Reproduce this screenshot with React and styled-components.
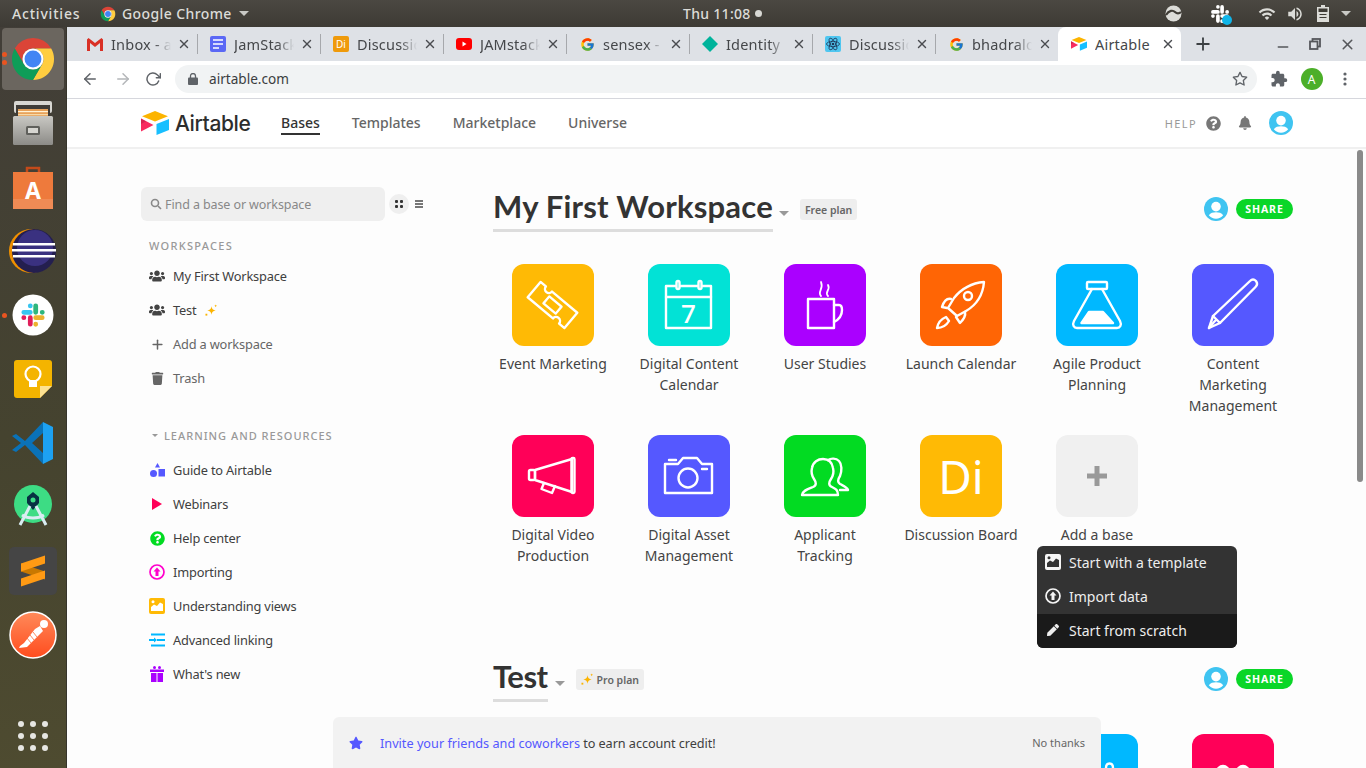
import React from 'react';
import styled, { createGlobalStyle } from 'styled-components';
import { FaUsers, FaTrash, FaBell, FaQuestionCircle, FaStar, FaPen } from 'react-icons/fa';
import { FcGoogle } from 'react-icons/fc';
import { MdExtension, MdVolumeUp, MdWifi } from 'react-icons/md';
import { FiArrowLeft, FiArrowRight, FiRotateCw, FiStar, FiPlus, FiX, FiMinus } from 'react-icons/fi';

const FONT = '"Noto Sans", "Open Sans", sans-serif';

const GlobalStyle = createGlobalStyle`
  html, body { margin: 0; padding: 0; background: #fdfdfd; }
  * { box-sizing: border-box; }
  body { font-family: ${FONT}; }
`;

// 전체 화면
const Screen = styled.div`
  width: 1366px;
  height: 768px;
  overflow: hidden;
  display: flex;
  flex-direction: column;
`;

// 상단 시스템 바
const TopBar = styled.div`
  height: 27px;
  flex: none;
  display: flex;
  align-items: center;
  background: linear-gradient(#4b4842, #3d3a34);
  color: #dcdcd8;
  font-size: 14px;
  font-weight: 500;
`;
const Activities = styled.span`
  margin-left: 12px;
  width: 88px;
  letter-spacing: 0.8px;
`;
const AppMenu = styled.div`
  display: flex;
  align-items: center;
  gap: 6px;
  width: 150px;
  letter-spacing: 0.4px;
`;
const Caret = styled.span`
  flex: none;
  width: 0;
  height: 0;
  border-left: ${p => p.$size || 5}px solid transparent;
  border-right: ${p => p.$size || 5}px solid transparent;
  border-top: ${p => p.$size || 5}px solid ${p => p.$color || '#c9c9c5'};
  margin-left: ${p => p.$gap || 0}px;
  margin-top: ${p => p.$drop || 0}px;
`;
const Clock = styled.div`
  margin-left: 433px;
  width: 472px;
  display: flex;
  align-items: center;
  gap: 4px;
  letter-spacing: 0.3px;
`;
const ClockDot = styled.span`
  width: 7px;
  height: 7px;
  border-radius: 50%;
  background: #d8d8d4;
`;
const Tray = styled.div`
  display: flex;
  align-items: center;
  color: #dcdcd8;
`;
const TraySlot = styled.div`
  width: ${p => p.$w}px;
  display: flex;
  justify-content: center;
  align-items: center;
`;
const TrayBadge = styled.div`
  position: relative;
  width: 20px;
  height: 20px;
  svg + svg {
    position: absolute;
    right: -2px;
    bottom: -1px;
  }
`;

const Body = styled.div`
  flex: 1;
  display: flex;
  min-height: 0;
`;

// 왼쪽 독
const Dock = styled.div`
  width: 67px;
  flex: none;
  display: flex;
  flex-direction: column;
  position: relative;
  background: linear-gradient(175deg, #423e38 0%, #45432f 55%, #4e4b30 100%);
  border-right: 1px solid #37352c;
`;
const DockItem = styled.div`
  height: 64px;
  flex: none;
  display: flex;
  align-items: center;
  justify-content: center;
  position: relative;
  &::before {
    content: '';
    position: absolute;
    inset: 1px 2px 1px 2px;
    border-radius: 4px;
    background: ${p => (p.$active ? '#6b665f' : 'transparent')};
  }
  svg { position: relative; }
`;
const RunDot = styled.span`
  position: absolute;
  left: 2px;
  top: ${p => p.$top}px;
  width: 5px;
  height: 5px;
  border-radius: 50%;
  background: #e95420;
`;
const DockGrid = styled.div`
  margin-top: auto;
  margin-bottom: 17px;
  margin-left: 18px;
  display: grid;
  grid-template-columns: repeat(3, 6px);
  gap: 6px;
`;
const GridDot = styled.span`
  width: 6px;
  height: 6px;
  border-radius: 50%;
  background: #e6e6e2;
`;

// 크롬 창
const Browser = styled.div`
  flex: 1;
  min-width: 0;
  display: flex;
  flex-direction: column;
`;
const TabStrip = styled.div`
  height: 34px;
  flex: none;
  display: flex;
  align-items: stretch;
  padding-left: 7px;
  background: #dee1e6;
`;
const TabBox = styled.div`
  width: 123px;
  flex: none;
  position: relative;
  display: flex;
  align-items: center;
  padding-left: 13px;
  background: ${p => (p.$active ? '#fff' : 'transparent')};
  border-radius: 8px 8px 0 0;
  color: #45474a;
  font-size: 14.5px;
  &::after {
    content: '';
    position: absolute;
    right: -1px;
    top: 7px;
    bottom: 7px;
    width: 1px;
    background: ${p => (p.$last ? 'transparent' : '#a6a8ac')};
  }
`;
const TabIcon = styled.div`
  width: 16px;
  height: 16px;
  flex: none;
  display: flex;
  align-items: center;
  justify-content: center;
`;
const TabTitle = styled.span`
  margin-left: 8px;
  width: 60px;
  white-space: nowrap;
  overflow: hidden;
  letter-spacing: 0.2px;
  -webkit-mask-image: ${p => (p.$active ? 'none' : 'linear-gradient(to right, #000 72%, transparent 100%)')};
`;
const TabClose = styled.div`
  margin-left: 6px;
  display: flex;
  color: #4a4c50;
`;
const NewTab = styled.div`
  width: 44px;
  display: flex;
  align-items: center;
  justify-content: center;
  color: #3c4043;
`;
const WinButtons = styled.div`
  margin-left: auto;
  display: flex;
  align-items: center;
  padding-right: 2px;
  color: #55575b;
`;
const WinButton = styled.div`
  width: 33px;
  display: flex;
  justify-content: center;
  svg { margin-top: ${p => p.$drop || 0}px; margin-left: ${p => p.$nudge || 0}px; }
`;

const Toolbar = styled.div`
  height: 38px;
  flex: none;
  display: flex;
  align-items: center;
  background: #fff;
  border-bottom: 1px solid #d6d7dd;
  padding: 0 0 1px 6px;
`;
const NavButton = styled.div`
  width: ${p => p.$w || 33}px;
  display: flex;
  justify-content: center;
  color: ${p => (p.$off ? '#b4b6b9' : '#5f6368')};
`;
const Omnibox = styled.div`
  width: 1082px;
  height: 28px;
  margin-left: 8px;
  padding: 0 9px 0 13px;
  display: flex;
  align-items: center;
  border-radius: 14px;
  background: #f1f3f4;
  color: #3b3d40;
  font-size: 13.6px;
`;
const Url = styled.span`
  margin-left: 11px;
  flex: 1;
  margin-bottom: 1px;
`;
const ToolIcons = styled.div`
  display: flex;
  align-items: center;
  margin-left: 5px;
  color: #5f6368;
`;
const ToolSlot = styled.div`
  width: 33px;
  display: flex;
  justify-content: center;
`;
const ChromeAvatar = styled.div`
  width: 22px;
  height: 22px;
  border-radius: 50%;
  background: #4caf29;
  color: #fff;
  font-size: 12px;
  display: flex;
  align-items: center;
  justify-content: center;
`;

// 페이지
const Page = styled.div`
  flex: 1;
  min-height: 0;
  position: relative;
  overflow: hidden;
  display: flex;
  flex-direction: column;
  background: #fdfdfd;
`;
const Header = styled.div`
  height: 50px;
  flex: none;
  display: flex;
  align-items: center;
  padding: 0 73px 0 74px;
  background: #fff;
  border-bottom: 2px solid #f0f0f0;
`;
const Brand = styled.div`
  display: flex;
  align-items: center;
  gap: 6px;
  width: 140px;
  color: #2d2d2d;
  font-family: Inter, sans-serif;
  font-size: 21px;
  font-weight: 500;
  letter-spacing: -0.4px;
`;
const NavLinks = styled.div`
  display: flex;
  gap: 32px;
  align-self: stretch;
  align-items: center;
`;
const NavLink = styled.div`
  font-size: 14px;
  font-weight: 500;
  color: ${p => (p.$active ? '#333' : '#666')};
  padding: 2px 0 1px;
  border-bottom: 2px solid ${p => (p.$active ? '#333' : 'transparent')};
`;
const HeaderRight = styled.div`
  margin-left: auto;
  display: flex;
  align-items: center;
  color: #777;
`;
const HelpText = styled.span`
  font-size: 11px;
  letter-spacing: 1.4px;
  color: #999;
  margin-right: 9px;
`;
const HeaderIcon = styled.div`
  margin-left: ${p => p.$gap || 0}px;
  display: flex;
`;

const Content = styled.div`
  flex: 1;
  display: flex;
  padding: 38px 0 0 74px;
  min-height: 0;
`;
const Sidebar = styled.div`
  width: 344px;
  flex: none;
`;
const SearchRow = styled.div`
  display: flex;
  align-items: center;
`;
const SearchBox = styled.div`
  width: 244px;
  height: 34px;
  border-radius: 6px;
  background: #efefef;
  display: flex;
  align-items: center;
  gap: 3px;
  padding-left: 9px;
  color: #888;
  font-size: 12.5px;
  letter-spacing: -0.1px;
`;
const GridToggle = styled.div`
  width: 20px;
  height: 20px;
  margin-left: 4px;
  border-radius: 50%;
  background: #efefef;
  display: grid;
  grid-template-columns: repeat(2, 3px);
  gap: 2px;
  place-content: center;
`;
const ToggleDot = styled.span`
  width: 3px;
  height: 3px;
  background: #333;
  border-radius: 1px;
`;
const ListToggle = styled.div`
  margin-left: 6px;
  width: 8px;
  height: 8px;
  border-top: 2px solid #777;
  border-bottom: 2px solid #777;
  position: relative;
  &::after {
    content: '';
    position: absolute;
    left: 0;
    right: 0;
    top: 1px;
    height: 2px;
    background: #777;
  }
`;
const SideHeading = styled.div`
  display: flex;
  align-items: center;
  height: 20px;
  margin: ${p => p.$top}px 0 ${p => p.$bottom}px ${p => p.$left || 8}px;
  font-size: 11px;
  font-weight: 500;
  letter-spacing: ${p => p.$spacing || 1.3}px;
  color: #999;
`;
const HeadingText = styled.span`
  margin-left: 6px;
`;
const SideItem = styled.div`
  height: 34px;
  display: flex;
  align-items: center;
  font-size: 12.8px;
  letter-spacing: -0.17px;
  color: ${p => (p.$muted ? '#666' : '#404040')};
`;
const SideIcon = styled.div`
  width: 16px;
  height: 16px;
  margin: 0 8px;
  display: flex;
  align-items: center;
  justify-content: center;
  color: ${p => p.$color || '#444'};
`;
const SideSparkle = styled.span`
  margin-left: 8px;
  display: flex;
`;

const Main = styled.div`
  width: 816px;
  flex: none;
`;
const SectionHead = styled.div`
  height: 45px;
  padding: 0 8px;
  display: flex;
  align-items: center;
`;
const TitleWrap = styled.div`
  height: 45px;
  border-bottom: 3px solid #ddd;
  display: flex;
  align-items: center;
  color: #333;
  font-family: Lato, sans-serif;
  font-size: 31px;
  font-weight: 700;
  line-height: 40px;
  letter-spacing: ${p => p.$spacing}px;
  padding-bottom: 5px;
`;
const PlanBadge = styled.div`
  margin-left: ${p => p.$gap}px;
  height: 21px;
  padding: 0 5px;
  border-radius: 3px;
  background: #eee;
  color: #666;
  font-size: 10.5px;
  font-weight: 600;
  display: flex;
  align-items: center;
  gap: 3px;
`;
const ShareWrap = styled.div`
  margin-left: auto;
  margin-bottom: 1px;
  display: flex;
  align-items: center;
  gap: 8px;
`;
const ShareButton = styled.div`
  width: 57px;
  height: 20px;
  border-radius: 10px;
  background: #0ad628;
  color: #fff;
  font-size: 10.5px;
  font-weight: 700;
  letter-spacing: 0.9px;
  display: flex;
  align-items: center;
  justify-content: center;
`;
const BaseGrid = styled.div`
  margin: 32px 0 ${p => p.$bottom || 0}px;
  display: grid;
  grid-template-columns: repeat(6, 136px);
  grid-template-rows: ${p => p.$rows || 'auto'};
  row-gap: 18px;
`;
const BaseItem = styled.div`
  position: relative;
  display: flex;
  flex-direction: column;
  align-items: center;
`;
const Tile = styled.div`
  width: 82px;
  height: 82px;
  flex: none;
  border-radius: 12px;
  background: ${p => p.$color};
  display: flex;
  align-items: center;
  justify-content: center;
  color: #fff;
  font-size: 46px;
  svg { display: block; }
`;
const BaseLabel = styled.div`
  margin-top: 7px;
  width: 116px;
  text-align: center;
  font-size: 14px;
  line-height: 21px;
  color: #444;
`;

// 베이스 추가 메뉴
const AddMenu = styled.div`
  position: absolute;
  left: 8px;
  top: 111px;
  width: 200px;
  border-radius: 6px;
  overflow: hidden;
  background: #333;
  z-index: 3;
`;
const MenuRow = styled.div`
  height: 34px;
  display: flex;
  align-items: center;
  padding: 0 0 2px 8px;
  gap: 8px;
  background: ${p => (p.$hot ? '#1a1a1a' : 'transparent')};
  color: #eee;
  font-size: 14px;
`;
const PenSlot = styled.span`
  width: 16px;
  display: flex;
  justify-content: center;
`;

// 하단 초대 배너
const Banner = styled.div`
  position: absolute;
  left: 266px;
  bottom: 0;
  width: 768px;
  height: 51px;
  border-radius: 6px 6px 0 0;
  background: #f2f2f2;
  display: flex;
  align-items: center;
  padding: 0 16px;
  font-size: 12.7px;
  color: #404040;
  z-index: 4;
`;
const BannerLink = styled.span`
  color: #5558ff;
  margin: 0 3px 0 17px;
`;
const BannerRest = styled.span`
  letter-spacing: -0.07px;
`;
const NoThanks = styled.span`
  margin-left: auto;
  font-size: 11px;
  color: #666;
`;
const Scrollbar = styled.div`
  position: absolute;
  right: 3px;
  top: 51px;
  width: 6px;
  height: 332px;
  border-radius: 3px;
  background: #8a8a8a;
`;

/* ---------- 그림 아이콘 ---------- */

function ChromeLogo({ size }) {
  return (
    <svg width={size} height={size} viewBox="0 0 48 48">
      <path fill="#db4437" d="M24 2A22 22 0 0 1 43 13H24A11 11 0 0 0 14.5 29.5L5 13A22 22 0 0 1 24 2Z" />
      <path fill="#ffcd40" d="M43 13A22 22 0 0 1 24 46L33.5 29.5A11 11 0 0 0 24 13Z" />
      <path fill="#0f9d58" d="M5 13A22 22 0 0 0 24 46L33.5 29.5A11 11 0 0 1 14.5 29.5Z" />
      <circle cx="24" cy="24" r="11" fill="#fff" />
      <circle cx="24" cy="24" r="8.8" fill="#4285f4" />
    </svg>
  );
}

// 슬랙 로고 조각
function SlackParts({ mono }) {
  const pill = { strokeWidth: 4.4, strokeLinecap: 'round', fill: 'none' };
  return (
    <>
      <path {...pill} stroke={mono || '#36c5f0'} d="M3.5 9.5H9.5M9.5 3.5V3.6" />
      <path {...pill} stroke={mono || '#2eb67d'} d="M14.5 3.5V9.5M20.5 9.5H20.6" />
      <path {...pill} stroke={mono || '#ecb22e'} d="M14.5 14.5H20.5M14.5 20.5V20.6" />
      <path {...pill} stroke={mono || '#e01e5a'} d="M9.5 14.5V20.5M3.5 14.5H3.6" />
    </>
  );
}

function AirtableLogo({ size }) {
  return (
    <svg width={size} height={size * 24 / 28} viewBox="0 0 28 24">
      <path fill="#fcb400" d="M14 0L27 5.2 14 10.5 1 5.2Z" />
      <path fill="#18bfff" d="M15.5 13L28 8V19L15.5 24Z" />
      <path fill="#f82b60" d="M0 7.6L12.5 14 0 20.4Z" />
      <path fill="#ba1e45" d="M0 7.6L5 10.2 0 13Z" opacity=".55" />
    </svg>
  );
}

function Avatar({ size }) {
  return (
    <svg width={size} height={size} viewBox="0 0 24 24">
      <circle cx="12" cy="12" r="12" fill="#3fc4f1" />
      <circle cx="12" cy="9.6" r="4.8" fill="#fff" />
      <path fill="#fff" d="M4.8 18.3C6.6 15.9 9 15.3 12 15.3s5.4.6 7.2 3A9.4 9.4 0 0 1 4.8 18.3Z" />
    </svg>
  );
}

function Sparkle({ size }) {
  return (
    <svg width={size} height={size} viewBox="0 0 14 14" fill="#fcb400">
      <path d="M7 2.5C7.4 5.3 8.6 6.5 11.5 7 8.6 7.5 7.4 8.7 7 11.5 6.6 8.7 5.4 7.5 2.5 7 5.4 6.5 6.6 5.3 7 2.5Z" />
      <path d="M11.5.5l.5 1 1 .5-1 .5-.5 1-.5-1-1-.5 1-.5Z" />
      <rect x="0.5" y="10.5" width="2" height="2" />
    </svg>
  );
}

const Line = ({ children, width = 2.4 }) => (
  <svg width="82" height="82" viewBox="0 0 82 82" fill="none" stroke="#fff" strokeWidth={width} strokeLinejoin="round" strokeLinecap="round">
    {children}
  </svg>
);

const glyphs = {
  ticket: (
    <Line>
      <g transform="translate(40.5 41) rotate(40)">
        <path d="M-24 -10H-17A4 4 0 0 0 -9 -10H24V10H17A4 4 0 0 0 9 10H-24Z" />
        <rect x="-8" y="-4.5" width="16" height="9" />
      </g>
    </Line>
  ),
  calendar: (
    <Line>
      <rect x="18" y="22" width="45" height="42" />
      <path d="M18 33H63" />
      <rect x="28.5" y="17" width="3" height="8" rx="1.5" fill="#02e2d6" />
      <rect x="50.5" y="17" width="3" height="8" rx="1.5" fill="#02e2d6" />
      <text x="40.5" y="59" textAnchor="middle" fill="#fff" stroke="none" fontSize="26" fontWeight="500" fontFamily={FONT}>7</text>
    </Line>
  ),
  cup: (
    <Line>
      <rect x="24" y="35" width="26" height="29" />
      <path d="M50 41H55C58 41 58 44 58 46C58 52 54 56 50 58" />
      <path d="M37 32C33 28 40 25 37 18M44 32C40 28 47 26 44 21" strokeWidth="1.8" />
    </Line>
  ),
  rocket: (
    <Line>
      <path d="M64 18C52 19 42 24 34 34L28 44L37 52L46 47C58 40 63 30 64 18Z" />
      <circle cx="48" cy="32" r="4" />
      <path d="M31 35C27 34 24 37 22 43L27 44M45 48C46 52 44 55 40 59L36 53" />
      <path d="M26 53C21 55 18 59 17 64C22 64 26 62 29 57Z" />
    </Line>
  ),
  flask: (
    <Line>
      <rect x="31" y="18" width="20" height="7" rx="1" />
      <path d="M36 25L18 57C16 61 18 64 21 64H61C64 64 66 61 64 57L46 25" />
      <path d="M25.5 59L33 48H47L57 59Z" fill="#fff" />
    </Line>
  ),
  pencil: (
    <Line>
      <path d="M17 64L21 52L58 17C60 15 62 15 64 17C65.5 19 65.5 21 63.5 23L28 59Z" />
      <path d="M17 64L22 58L24 56" fill="#fff" />
      <path d="M21 52L28 59" />
    </Line>
  ),
  megaphone: (
    <Line>
      <path d="M23 35L60 24V57L23 45Z" />
      <rect x="59.5" y="23" width="3" height="35" rx="1.2" />
      <rect x="17" y="35" width="6" height="10" rx="1.5" />
      <path d="M32 48L29.5 54L40 58L43 51" />
    </Line>
  ),
  camera: (
    <Line>
      <path d="M17 29H30L35 23H49L54 29H64V58H17Z" />
      <circle cx="40" cy="43" r="9.5" />
      <path d="M21 25H28M54 34H59" />
    </Line>
  ),
  users: (
    <Line>
      <path d="M18 60C19 55 24 54 29 52C33 50 32 47 30 44C28 41 27 37 28 33C29 27 34 24 39 24C44 24 48 27 49 33C50 37 49 41 47 44C45 47 44 50 48 52C52 54 54 55 54 60Z" />
      <path d="M44 25C47 23 52 23 55 26C58 29 58 36 56 41C54 44 53 47 56 49C60 51 63 52 64 55H56" />
    </Line>
  ),
  plus: (
    <svg width="22" height="22" viewBox="0 0 22 22" fill="#999">
      <rect x="8.5" y="1" width="5" height="20" />
      <rect x="1" y="8.5" width="20" height="5" />
    </svg>
  ),
  lowerBlue: (
    <Line>
      <path d="M50 34C50 28 57 28 57 34V50" />
    </Line>
  ),
  lowerPink: (
    <Line>
      <circle cx="31" cy="38" r="6" fill="#fff" />
      <circle cx="51" cy="38" r="6" fill="#fff" />
    </Line>
  ),
};

const ImageIcon = ({ size, color, cut }) => (
  <svg width={size} height={size} viewBox="0 0 16 16">
    <rect width="16" height="16" rx="2" fill={color} />
    <path fill={cut} d="M2 13V9L5 6.5L8 8L11 4.5L14 6V13Z" />
    <circle cx="4" cy="3.8" r="1.5" fill={cut} />
  </svg>
);

const UploadIcon = ({ size, color }) => (
  <svg width={size} height={size} viewBox="0 0 16 16">
    <circle cx="8" cy="8" r="7" fill="none" stroke={color} strokeWidth="1.7" />
    <path fill={color} d="M8 3.5L11.5 7.5H9.5V12H6.5V7.5H4.5Z" />
  </svg>
);

const sideIcons = {
  guide: (
    <svg width="15" height="15" viewBox="0 0 15 15" fill="#5558ff">
      <path d="M7.5 0L10 4.5H5Z" />
      <circle cx="3.5" cy="10.5" r="3.5" />
      <rect x="8.5" y="6" width="6.5" height="7.5" />
    </svg>
  ),
  play: (
    <svg width="12" height="12" viewBox="0 0 12 12"><path fill="#ff0058" d="M1 0L11 6L1 12Z" /></svg>
  ),
  link: (
    <svg width="16" height="14" viewBox="0 0 16 14" fill="#00b8ff">
      <rect x="2" y="0.5" width="14" height="2" />
      <rect x="8" y="6" width="8" height="2" />
      <rect x="0" y="6" width="6" height="2" />
      <rect x="2" y="11.5" width="14" height="2" />
      <path d="M5 4.5L8 7L5 9.5Z" />
    </svg>
  ),
  gift: (
    <svg width="14" height="16" viewBox="0 0 14 16" fill="#aa00ff">
      <rect x="0" y="3.5" width="14" height="2.5" />
      <rect x="1" y="7" width="5.5" height="9" />
      <rect x="7.5" y="7" width="5.5" height="9" />
      <circle cx="4.5" cy="1.5" r="1.5" />
      <circle cx="9.5" cy="1.5" r="1.5" />
    </svg>
  ),
};

/* ---------- 독 아이콘 ---------- */

const FilesIcon = () => (
  <svg width="44" height="46" viewBox="0 0 44 46">
    <defs>
      <linearGradient id="cabinet" x1="0" y1="0" x2="0" y2="1">
        <stop offset="0" stopColor="#c9c8c3" />
        <stop offset="1" stopColor="#8c8b87" />
      </linearGradient>
    </defs>
    <rect x="3" y="1" width="38" height="12" rx="2" fill="#d8d7d2" />
    <rect x="5" y="5" width="34" height="13" fill="#3f3c37" />
    <rect x="7" y="9" width="30" height="7" fill="#e8a25a" />
    <rect x="7" y="11" width="30" height="1.2" fill="#fff3d8" />
    <rect x="7" y="14" width="30" height="1.2" fill="#f6d9a8" />
    <rect x="2" y="16" width="40" height="29" rx="1.5" fill="url(#cabinet)" />
    <rect x="15" y="26" width="14" height="9" rx="1.5" fill="#60605c" />
    <rect x="17" y="28" width="10" height="5" fill="#d6d5d0" />
  </svg>
);

const StoreIcon = () => (
  <svg width="42" height="44" viewBox="0 0 42 44">
    <path fill="none" stroke="#c34a1a" strokeWidth="2.5" d="M15 8V3H27V8" />
    <path fill="#ee7a3c" d="M1 7H41V44H1Z" />
    <path fill="#f08b55" d="M1 34H41V44H1Z" />
    <text x="21" y="34" textAnchor="middle" fill="#fff" fontSize="23" fontWeight="700" fontFamily={FONT}>A</text>
  </svg>
);

const EclipseIcon = () => (
  <svg width="50" height="46" viewBox="0 0 50 46">
    <circle cx="23" cy="23" r="22" fill="#f09000" />
    <circle cx="26" cy="23" r="22" fill="#241f4f" />
    <circle cx="27" cy="20" r="18" fill="#3a3180" />
    <rect x="5" y="15" width="42" height="2.5" fill="#fff" />
    <rect x="4" y="21" width="44" height="2.5" fill="#fff" />
    <rect x="5" y="27" width="42" height="2.5" fill="#fff" />
  </svg>
);

const SlackTile = () => (
  <svg width="42" height="42" viewBox="0 0 42 42">
    <circle cx="21" cy="21" r="20.5" fill="#fff" />
    <svg x="8" y="8" width="26" height="26" viewBox="0 0 24 24"><SlackParts /></svg>
  </svg>
);

const KeepIcon = () => (
  <svg width="38" height="38" viewBox="0 0 38 38">
    <path fill="#f4b400" d="M3 0H35C37 0 38 1 38 3V26L26 38H3C1 38 0 37 0 35V3C0 1 1 0 3 0Z" />
    <path fill="#fde293" d="M26 38L38 26H26Z" />
    <circle cx="19" cy="14" r="7.5" fill="none" stroke="#fff" strokeWidth="2.2" />
    <path fill="#fff" d="M15 20H23V27H15Z" />
  </svg>
);

const CodeIcon = () => (
  <svg width="44" height="44" viewBox="0 0 44 44">
    <path fill="#0a72b8" d="M32 1L14 20L5 13L1 15L10 22L1 29L5 31L14 24L32 43L32 32L21 22L32 12Z" />
    <path fill="#1da1f2" d="M32 1L42 6V38L32 43L32 32V12Z" />
  </svg>
);

const AndroidIcon = () => (
  <svg width="38" height="44" viewBox="0 0 38 44">
    <circle cx="19" cy="19" r="19" fill="#3ddc84" />
    <path fill="#073042" d="M19 7L25 12V18L19 25L13 18V12Z" />
    <circle cx="19" cy="15" r="2.5" fill="#3ddc84" />
    <path fill="none" stroke="#d9ecf2" strokeWidth="3" d="M16 21L6 40M22 21L32 40M8 30C14 34 24 34 30 30" />
  </svg>
);

const SublimeIcon = () => (
  <svg width="48" height="48" viewBox="0 0 48 48">
    <rect width="48" height="48" rx="5" fill="#454545" />
    <path fill="#c97800" d="M12 16.5V24.5L36 32.5V24.5Z" />
    <path fill="#ff9a14" d="M12 16.5L36 8.5V16.5L12 24.5Z" />
    <path fill="#ff9a14" d="M12 31.5L36 23.5V31.5L12 39.5Z" />
  </svg>
);

const PostmanIcon = () => (
  <svg width="48" height="48" viewBox="0 0 48 48">
    <defs>
      <linearGradient id="pm" x1="0" y1="0" x2="0" y2="1">
        <stop offset="0" stopColor="#ff8a5a" />
        <stop offset="1" stopColor="#ff4c1e" />
      </linearGradient>
    </defs>
    <circle cx="24" cy="24" r="23" fill="url(#pm)" stroke="#fff" strokeWidth="1.5" />
    <circle cx="35" cy="13" r="4" fill="#fff" />
    <path fill="#fff" d="M31 15L34 20L18 36L10 37L11 35L15 32L26 18Z" />
    <path fill="none" stroke="#ff6a35" strokeWidth=".8" d="M24 21L28 26M21 24L25 29M18 27L22 32" />
  </svg>
);

const dockApps = [
  { icon: <ChromeLogo size={46} />, active: true, dots: [25, 33] },
  { icon: <FilesIcon /> },
  { icon: <StoreIcon /> },
  { icon: <EclipseIcon /> },
  { icon: <SlackTile />, dots: [30] },
  { icon: <KeepIcon /> },
  { icon: <CodeIcon /> },
  { icon: <AndroidIcon /> },
  { icon: <SublimeIcon /> },
  { icon: <PostmanIcon /> },
];

/* ---------- 탭 ---------- */

const GmailIcon = () => (
  <svg width="16" height="13" viewBox="0 0 16 13">
    <path fill="#d93025" d="M0 1.5L1.5 0L8 5L14.5 0L16 1.5V13H13V5L8 9L3 5V13H0Z" />
  </svg>
);
const DocIcon = () => (
  <svg width="16" height="16" viewBox="0 0 16 16">
    <rect width="16" height="16" rx="2" fill="#5b68f5" />
    <path stroke="#fff" strokeWidth="1.6" d="M3 4H13M3 8H13M3 12H9" />
  </svg>
);
const DiIcon = () => (
  <svg width="16" height="16" viewBox="0 0 16 16">
    <rect width="16" height="16" rx="2" fill="#ef9a0b" />
    <text x="8" y="12" textAnchor="middle" fontSize="10" fill="#fff" fontFamily={FONT}>Di</text>
  </svg>
);
const YoutubeIcon = () => (
  <svg width="16" height="12" viewBox="0 0 16 12">
    <rect width="16" height="12" rx="3" fill="#f00" />
    <path fill="#fff" d="M6.5 3.5L10.5 6L6.5 8.5Z" />
  </svg>
);
const DiamondIcon = () => (
  <svg width="16" height="16" viewBox="0 0 16 16"><path fill="#00b39b" d="M8 0L16 8L8 16L0 8Z" /></svg>
);
const ReactTabIcon = () => (
  <svg width="16" height="16" viewBox="0 0 16 16">
    <rect width="16" height="16" rx="2" fill="#4fc6f0" />
    <g fill="none" stroke="#1d3557" strokeWidth=".8">
      <ellipse cx="8" cy="8" rx="6.5" ry="2.6" />
      <ellipse cx="8" cy="8" rx="6.5" ry="2.6" transform="rotate(60 8 8)" />
      <ellipse cx="8" cy="8" rx="6.5" ry="2.6" transform="rotate(120 8 8)" />
    </g>
    <circle cx="8" cy="8" r="1.3" fill="#1d3557" />
  </svg>
);
const GoogleTabIcon = () => <FcGoogle size={15} />;

const tabs = [
  { icon: <GmailIcon />, title: 'Inbox - ankit' },
  { icon: <DocIcon />, title: 'JamStack' },
  { icon: <DiIcon />, title: 'Discussion' },
  { icon: <YoutubeIcon />, title: 'JAMstack' },
  { icon: <GoogleTabIcon />, title: 'sensex - Google' },
  { icon: <DiamondIcon />, title: 'Identity | Netlify' },
  { icon: <ReactTabIcon />, title: 'Discussion' },
  { icon: <GoogleTabIcon />, title: 'bhadralok' },
  { icon: <AirtableLogo size={16} />, title: 'Airtable', active: true },
];

/* ---------- 데이터 ---------- */

const firstBases = [
  { name: 'Event Marketing', color: '#ffba05', glyph: glyphs.ticket },
  { name: 'Digital Content Calendar', color: '#02e2d6', glyph: glyphs.calendar },
  { name: 'User Studies', color: '#aa00ff', glyph: glyphs.cup },
  { name: 'Launch Calendar', color: '#ff6505', glyph: glyphs.rocket },
  { name: 'Agile Product Planning', color: '#00b8ff', glyph: glyphs.flask },
  { name: 'Content Marketing Management', color: '#5558ff', glyph: glyphs.pencil },
  { name: 'Digital Video Production', color: '#ff0058', glyph: glyphs.megaphone },
  { name: 'Digital Asset Management', color: '#5558ff', glyph: glyphs.camera },
  { name: 'Applicant Tracking', color: '#02db22', glyph: glyphs.users },
  { name: 'Discussion Board', color: '#ffba05', glyph: 'Di' },
];

const testBases = [
  { color: '#5558ff' },
  { color: '#ff0058' },
  { color: '#02db22' },
  { color: '#ffba05' },
  { color: '#00b8ff', glyph: glyphs.lowerBlue },
  { color: '#ff0058', glyph: glyphs.lowerPink },
];

const resources = [
  { name: 'Guide to Airtable', icon: sideIcons.guide },
  { name: 'Webinars', icon: sideIcons.play },
  { name: 'Help center', icon: <FaQuestionCircle size={15} color="#02db22" /> },
  { name: 'Importing', icon: <UploadIcon size={16} color="#ff00cc" /> },
  { name: 'Understanding views', icon: <ImageIcon size={16} color="#ffba05" cut="#fff" /> },
  { name: 'Advanced linking', icon: sideIcons.link },
  { name: "What's new", icon: sideIcons.gift },
];

function SectionHeader({ title, plan, sparkle, spacing, caretGap, planGap }) {
  return (
    <SectionHead>
      <TitleWrap $spacing={spacing}>{title}</TitleWrap>
      <Caret $color="#999" $size={5} $gap={caretGap} $drop={8} />
      <PlanBadge $gap={planGap}>
        {sparkle && <Sparkle size={13} />}
        {plan}
      </PlanBadge>
      <ShareWrap>
        <Avatar size={24} />
        <ShareButton>SHARE</ShareButton>
      </ShareWrap>
    </SectionHead>
  );
}

export default function App() {
  return (
    <Screen>
      <GlobalStyle />
      <TopBar>
        <Activities>Activities</Activities>
        <AppMenu>
          <ChromeLogo size={16} />
          <span>Google Chrome</span>
          <Caret $gap={1} />
        </AppMenu>
        <Clock>
          <span>Thu 11:08</span>
          <ClockDot />
        </Clock>
        <Tray>
          <TraySlot $w={36}>
            <svg width="17" height="17" viewBox="0 0 17 17">
              <circle cx="8.5" cy="8.5" r="8" fill="#dcdcd8" />
              <path d="M1 10C4 5 8 5 10 7C12 9 14 9 16 7" fill="none" stroke="#3f3c36" strokeWidth="2.2" />
            </svg>
          </TraySlot>
          <TraySlot $w={58}>
            <TrayBadge>
              <svg width="20" height="20" viewBox="0 0 24 24"><SlackParts mono="#fff" /></svg>
              <svg width="10" height="10" viewBox="0 0 10 10"><circle cx="5" cy="5" r="5" fill="#10b5e8" /></svg>
            </TrayBadge>
          </TraySlot>
          <TraySlot $w={36}><MdWifi size={18} /></TraySlot>
          <TraySlot $w={20}><MdVolumeUp size={18} /></TraySlot>
          <TraySlot $w={36}>
            <svg width="12" height="17" viewBox="0 0 12 17">
              <path fill="#dcdcd8" d="M4 0H8V2H12V17H0V2H4Z" />
              <path fill="#3f3c36" d="M1.5 3.5H10.5V7H1.5ZM2.5 9H9.5V10H2.5ZM2.5 12H9.5V13H2.5Z" />
            </svg>
          </TraySlot>
          <TraySlot $w={10}><Caret /></TraySlot>
        </Tray>
      </TopBar>

      <Body>
        <Dock>
          {dockApps.map((app, i) => (
            <DockItem key={i} $active={app.active}>
              {app.icon}
              {app.dots && app.dots.map(top => <RunDot key={top} $top={top} />)}
            </DockItem>
          ))}
          <DockGrid>
            {Array.from({ length: 9 }).map((_, i) => <GridDot key={i} />)}
          </DockGrid>
        </Dock>

        <Browser>
          <TabStrip>
            {tabs.map((tab, i) => (
              <TabBox key={i} $active={tab.active} $last={tab.active || i === tabs.length - 2}>
                <TabIcon>{tab.icon}</TabIcon>
                <TabTitle $active={tab.active}>{tab.title}</TabTitle>
                <TabClose><FiX size={14} strokeWidth={2.4} /></TabClose>
              </TabBox>
            ))}
            <NewTab><FiPlus size={20} strokeWidth={2.2} /></NewTab>
            <WinButtons>
              <WinButton $drop={6} $nudge={2}><FiMinus size={16} strokeWidth={2.4} /></WinButton>
              <WinButton>
                <svg width="12" height="12" viewBox="0 0 12 12" fill="none" stroke="#55575b" strokeWidth="1.8">
                  <rect x="3.5" y="1" width="7.5" height="7.5" />
                  <rect x="1" y="3.5" width="7.5" height="7.5" fill="#dee1e6" />
                </svg>
              </WinButton>
              <WinButton><FiX size={17} strokeWidth={2.2} /></WinButton>
            </WinButtons>
          </TabStrip>

          <Toolbar>
            <NavButton><FiArrowLeft size={18} strokeWidth={2} /></NavButton>
            <NavButton $off><FiArrowRight size={18} strokeWidth={2} /></NavButton>
            <NavButton $w={28}><FiRotateCw size={16} strokeWidth={2.2} /></NavButton>
            <Omnibox>
              <svg width="10" height="12" viewBox="0 0 10 12">
                <rect y="4.5" width="10" height="7.5" rx="1" fill="#5f6368" />
                <path d="M2.5 5V3a2.5 2.5 0 0 1 5 0V5" fill="none" stroke="#5f6368" strokeWidth="1.3" />
              </svg>
              <Url>airtable.com</Url>
              <FiStar size={16} color="#5f6368" />
            </Omnibox>
            <ToolIcons>
              <ToolSlot><MdExtension size={18} /></ToolSlot>
              <ToolSlot><ChromeAvatar>A</ChromeAvatar></ToolSlot>
              <ToolSlot>
                <svg width="4" height="14" viewBox="0 0 4 14" fill="#5f6368">
                  <circle cx="2" cy="2" r="1.6" />
                  <circle cx="2" cy="7" r="1.6" />
                  <circle cx="2" cy="12" r="1.6" />
                </svg>
              </ToolSlot>
            </ToolIcons>
          </Toolbar>

          <Page>
            <Header>
              <Brand>
                <AirtableLogo size={28} />
                <span>Airtable</span>
              </Brand>
              <NavLinks>
                <NavLink $active>Bases</NavLink>
                <NavLink>Templates</NavLink>
                <NavLink>Marketplace</NavLink>
                <NavLink>Universe</NavLink>
              </NavLinks>
              <HeaderRight>
                <HelpText>HELP</HelpText>
                <FaQuestionCircle size={15} />
                <HeaderIcon $gap={17}><FaBell size={14} /></HeaderIcon>
                <HeaderIcon $gap={17}><Avatar size={24} /></HeaderIcon>
              </HeaderRight>
            </Header>

            <Content>
              <Sidebar>
                <SearchRow>
                  <SearchBox>
                    <svg width="12" height="12" viewBox="0 0 12 12" fill="none" stroke="#888" strokeWidth="1.6">
                      <circle cx="5" cy="5" r="3.5" />
                      <path d="M8 8L11 11" />
                    </svg>
                    <span>Find a base or workspace</span>
                  </SearchBox>
                  <GridToggle>
                    <ToggleDot /><ToggleDot /><ToggleDot /><ToggleDot />
                  </GridToggle>
                  <ListToggle />
                </SearchRow>

                <SideHeading $top={14} $bottom={4}>WORKSPACES</SideHeading>
                <SideItem><SideIcon><FaUsers size={16} /></SideIcon>My First Workspace</SideItem>
                <SideItem>
                  <SideIcon><FaUsers size={16} /></SideIcon>Test
                  <SideSparkle><Sparkle size={13} /></SideSparkle>
                </SideItem>
                <SideItem $muted><SideIcon $color="#666"><FiPlus size={15} strokeWidth={2.4} /></SideIcon>Add a workspace</SideItem>
                <SideItem $muted><SideIcon $color="#666"><FaTrash size={13} /></SideIcon>Trash</SideItem>

                <SideHeading $top={30} $bottom={8} $left={11} $spacing={1}>
                  <Caret $color="#999" $size={3.5} />
                  <HeadingText>LEARNING AND RESOURCES</HeadingText>
                </SideHeading>
                {resources.map(item => (
                  <SideItem key={item.name}>
                    <SideIcon>{item.icon}</SideIcon>
                    {item.name}
                  </SideItem>
                ))}
              </Sidebar>

              <Main>
                <SectionHeader title="My First Workspace" plan="Free plan" spacing={0.2} caretGap={6} planGap={11} />
                <BaseGrid $bottom={90} $rows="153px 132px">
                  {firstBases.map(base => (
                    <BaseItem key={base.name}>
                      <Tile $color={base.color}>{base.glyph}</Tile>
                      <BaseLabel>{base.name}</BaseLabel>
                    </BaseItem>
                  ))}
                  <BaseItem>
                    <Tile $color="#f0f0f0">{glyphs.plus}</Tile>
                    <BaseLabel>Add a base</BaseLabel>
                    <AddMenu>
                      <MenuRow>
                        <ImageIcon size={16} color="#f5f5f5" cut="#333" />
                        Start with a template
                      </MenuRow>
                      <MenuRow>
                        <UploadIcon size={16} color="#f5f5f5" />
                        Import data
                      </MenuRow>
                      <MenuRow $hot>
                        <PenSlot><FaPen size={12} /></PenSlot>
                        Start from scratch
                      </MenuRow>
                    </AddMenu>
                  </BaseItem>
                </BaseGrid>

                <SectionHeader title="Test" plan="Pro plan" sparkle spacing={-0.5} caretGap={7} planGap={11} />
                <BaseGrid>
                  {testBases.map((base, i) => (
                    <BaseItem key={i}>
                      <Tile $color={base.color}>{base.glyph}</Tile>
                    </BaseItem>
                  ))}
                </BaseGrid>
              </Main>
            </Content>

            <Scrollbar />
            <Banner>
              <FaStar size={14} color="#5558ff" />
              <BannerLink>Invite your friends and coworkers</BannerLink>
              <BannerRest>to earn account credit!</BannerRest>
              <NoThanks>No thanks</NoThanks>
            </Banner>
          </Page>
        </Browser>
      </Body>
    </Screen>
  );
}
